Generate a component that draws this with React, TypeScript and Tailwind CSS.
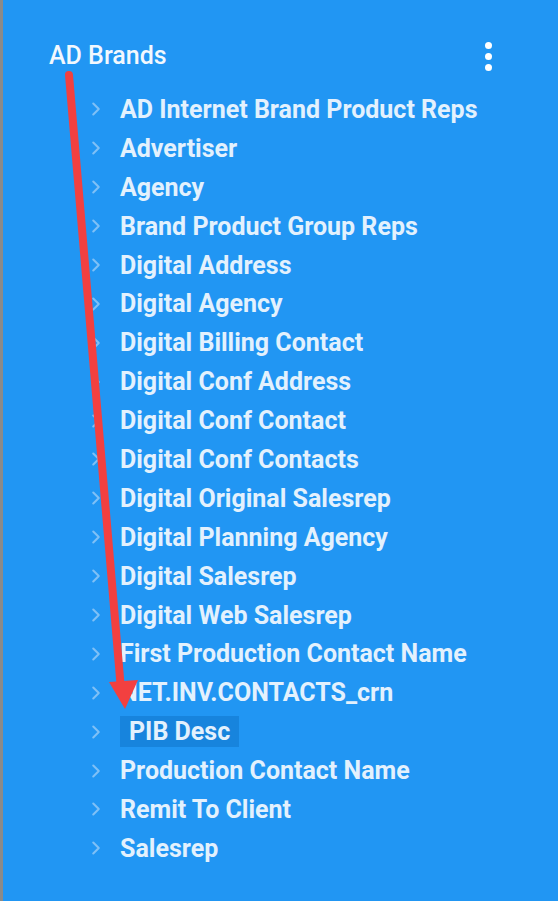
import { ChevronRight } from "lucide-react";

const items = [
  "AD Internet Brand Product Reps",
  "Advertiser",
  "Agency",
  "Brand Product Group Reps",
  "Digital Address",
  "Digital Agency",
  "Digital Billing Contact",
  "Digital Conf Address",
  "Digital Conf Contact",
  "Digital Conf Contacts",
  "Digital Original Salesrep",
  "Digital Planning Agency",
  "Digital Salesrep",
  "Digital Web Salesrep",
  "First Production Contact Name",
  "NET.INV.CONTACTS_crn",
  "PIB Desc",
  "Production Contact Name",
  "Remit To Client",
  "Salesrep",
];

export default function App() {
  return (
    <div
      className="relative flex h-[901px] w-[558px] overflow-hidden bg-[#2196f3]"
      style={{ fontFamily: "Roboto, 'Liberation Sans', sans-serif" }}
    >
      <div className="w-[3px] shrink-0 bg-[#8a8a8a]" />
      <div className="flex flex-1 flex-col">
        {/* header */}
        <div className="flex items-center justify-between pl-[46px] pr-[66px] pt-[40px]">
          <span className="text-[25px] font-medium leading-[32px] text-[#f2f8fe]">
            AD Brands
          </span>
          <span className="flex flex-col gap-[4px]">
            <span className="h-[7px] w-[7px] rounded-full bg-white" />
            <span className="h-[7px] w-[7px] rounded-full bg-white" />
            <span className="h-[7px] w-[7px] rounded-full bg-white" />
          </span>
        </div>

        {/* tree */}
        <ul className="mt-[18px] flex flex-col pl-[82px]">
          {items.map((label) => (
            <li key={label} className="flex h-[38.9px] items-center">
              <ChevronRight
                className="h-[22px] w-[22px] shrink-0 text-[#7fc0f6]"
                strokeWidth={2.25}
              />
              {label === "PIB Desc" ? (
                <span className="ml-[13px] bg-[#1784dd] px-[9px] text-[25px] font-bold leading-[31px] text-[#e3f1fd]">
                  {label}
                </span>
              ) : (
                <span className="ml-[13px] text-[25px] font-bold leading-[31px] text-[#e3f1fd]">
                  {label}
                </span>
              )}
            </li>
          ))}
        </ul>
      </div>

      {/* annotation arrow */}
      <svg
        className="pointer-events-none absolute left-0 top-0"
        width="558"
        height="901"
        viewBox="0 0 558 901"
      >
        <line
          x1="69"
          y1="75"
          x2="121"
          y2="690"
          stroke="#f24040"
          strokeWidth="8"
          strokeLinecap="round"
        />
        <polygon points="109,682 138,680 125,709" fill="#f24040" />
      </svg>
    </div>
  );
}
